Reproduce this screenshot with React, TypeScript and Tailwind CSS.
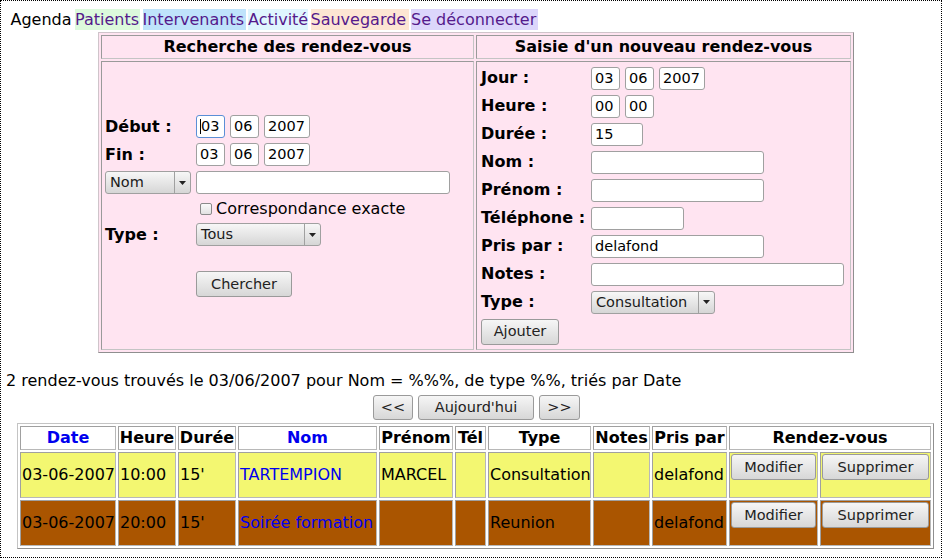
import React from "react";

function Input({ w, value, focused }: { w: string; value?: string; focused?: boolean }) {
  return (
    <div
      className={`${w} h-[23px] shrink-0 rounded-[3px] border ${
        focused ? "border-[#5b8fd6]" : "border-[#a0a0a0]"
      } bg-white flex items-center pl-[3px] text-[14.5px] text-black leading-none`}
    >
      {focused && <span className="w-px h-[15px] bg-black" />}
      {value}
    </div>
  );
}

function Select({ w, text }: { w: string; text: string }) {
  return (
    <div
      className={`${w} h-[23px] shrink-0 flex rounded-[3px] border border-[#a0a0a0] bg-linear-to-b from-[#f7f7f7] to-[#d6d6d6] text-[14.5px] text-[#1a1a1a] leading-none`}
    >
      <span className="flex-1 flex items-center pl-[4px]">{text}</span>
      <span className="w-[16px] border-l border-[#a0a0a0] flex items-center justify-center">
        <svg width="7" height="4" viewBox="0 0 7 4">
          <path d="M0 0h7L3.5 4z" fill="#222" />
        </svg>
      </span>
    </div>
  );
}

function Btn({ cls, children }: { cls: string; children: React.ReactNode }) {
  return (
    <button
      type="button"
      className={`${cls} shrink-0 flex items-center justify-center rounded-[3px] border border-[#9a9a9a] bg-linear-to-b from-[#f6f6f6] to-[#d7d7d7] text-[14.5px] text-[#222] leading-none`}
    >
      {children}
    </button>
  );
}

const pinkCell =
  "bg-[#ffe4f1] border border-t-[#9a9a9a] border-l-[#9a9a9a] border-b-[#c4c4c4] border-r-[#c4c4c4]";
const tCell =
  "border border-t-[#a0a0a0] border-l-[#a0a0a0] border-b-[#b8b8b8] border-r-[#b8b8b8]";

function Label({ children, w }: { children: React.ReactNode; w: string }) {
  return <div className={`${w} shrink-0 font-bold text-[16px] leading-none`}>{children}</div>;
}

function RRow({ label, children }: { label: string; children: React.ReactNode }) {
  return (
    <div className="flex items-center h-[23px]">
      <Label w="w-[110px]">{label}</Label>
      <div className="flex gap-[5px]">{children}</div>
    </div>
  );
}

export default function App() {
  const head = "bg-white flex items-center justify-center font-bold text-[16px] " + tCell;
  const yellow = "bg-[#f3f771] flex items-center pl-[1px] text-[16px] " + tCell;
  const brown = "bg-[#aa5500] flex items-center pl-[1px] text-[16px] " + tCell;
  const yBtn = "bg-[#f3f771] p-[1px] " + tCell;
  const bBtn = "bg-[#aa5500] p-[1px] " + tCell;
  return (
    <div className="w-[942px] h-[558px] overflow-hidden border border-dotted border-black bg-white text-black font-['DejaVu_Sans',sans-serif]">
      {/* nav */}
      <div className="flex gap-[2.5px] pl-[9.5px] mt-[8px] h-[21px] leading-[21px] text-[16px]">
        <span className="w-[62px]">Agenda</span>
        <span className="w-[65px] bg-[#dcfadc] text-[#551a8b]">Patients</span>
        <span className="w-[103px] bg-[#bfe3fb] text-[#551a8b]">Intervenants</span>
        <span className="w-[60px] bg-[#dff6fe] text-[#551a8b]">Activité</span>
        <span className="w-[98px] bg-[#fde6d3] text-[#551a8b]">Sauvegarde</span>
        <span className="w-[127px] bg-[#dcd6fb] text-[#551a8b]">Se déconnecter</span>
      </div>

      {/* top table */}
      <div className="ml-[97px] mt-[2px] w-[756px] p-[2px] bg-[#ffe4f1] border border-t-[#cfc4ca] border-l-[#cfc4ca] border-b-[#8f8f8f] border-r-[#8f8f8f] grid grid-cols-[373px_375px] grid-rows-[24px_289px] gap-[2px]">
        <div className={`${pinkCell} flex items-center justify-center font-bold text-[16px]`}>
          Recherche des rendez-vous
        </div>
        <div className={`${pinkCell} flex items-center justify-center font-bold text-[16px]`}>
          Saisie d'un nouveau rendez-vous
        </div>

        {/* left body */}
        <div className={`${pinkCell} flex flex-col justify-center pl-[3px]`}>
          <div className="flex flex-col mt-[1px]">
            <div className="flex items-center h-[23px]">
              <Label w="w-[91px]">Début :</Label>
              <div className="flex gap-[5px]">
                <Input w="w-[29px]" value="03" focused />
                <Input w="w-[29px]" value="06" />
                <Input w="w-[46px]" value="2007" />
              </div>
            </div>
            <div className="flex items-center h-[23px] mt-[5px]">
              <Label w="w-[91px]">Fin :</Label>
              <div className="flex gap-[5px]">
                <Input w="w-[29px]" value="03" />
                <Input w="w-[29px]" value="06" />
                <Input w="w-[46px]" value="2007" />
              </div>
            </div>
            <div className="flex items-center h-[23px] mt-[5px]">
              <div className="w-[91px] shrink-0">
                <Select w="w-[86px]" text="Nom" />
              </div>
              <Input w="w-[254px]" />
            </div>
            <div className="flex items-center h-[20px] mt-[5px] pl-[95px] text-[16px]">
              <span className="w-[12px] h-[12px] mr-[4px] border border-[#8a8a8a] bg-linear-to-b from-[#fafafa] to-[#e2e2e2] rounded-[2px]" />
              Correspondance exacte
            </div>
            <div className="flex items-center h-[23px] mt-[4px]">
              <Label w="w-[91px]">Type :</Label>
              <Select w="w-[125px]" text="Tous" />
            </div>
            <div className="pl-[91px] mt-[25px]">
              <Btn cls="w-[96px] h-[26px]">Chercher</Btn>
            </div>
          </div>
        </div>

        {/* right body */}
        <div className={`${pinkCell} flex flex-col justify-center pl-[4px]`}>
          <div className="flex flex-col gap-[5px]">
            <RRow label="Jour :">
              <Input w="w-[29px]" value="03" />
              <Input w="w-[29px]" value="06" />
              <Input w="w-[46px]" value="2007" />
            </RRow>
            <RRow label="Heure :">
              <Input w="w-[29px]" value="00" />
              <Input w="w-[29px]" value="00" />
            </RRow>
            <RRow label="Durée :">
              <Input w="w-[52px]" value="15" />
            </RRow>
            <RRow label="Nom :">
              <Input w="w-[173px]" />
            </RRow>
            <RRow label="Prénom :">
              <Input w="w-[173px]" />
            </RRow>
            <RRow label="Téléphone :">
              <Input w="w-[93px]" />
            </RRow>
            <RRow label="Pris par :">
              <Input w="w-[173px]" value="delafond" />
            </RRow>
            <RRow label="Notes :">
              <Input w="w-[253px]" />
            </RRow>
            <RRow label="Type :">
              <Select w="w-[124px]" text="Consultation" />
            </RRow>
            <div>
              <Btn cls="w-[78px] h-[26px]">Ajouter</Btn>
            </div>
          </div>
        </div>
      </div>

      {/* results text */}
      <div className="mt-[18px] pl-[5px] h-[19px] leading-[19px] text-[16px]">
        2 rendez-vous trouvés le 03/06/2007 pour Nom = %%%, de type %%, triés par Date
      </div>

      <div className="flex gap-[5px] ml-[372px] mt-[5px]">
        <Btn cls="w-[40px] h-[25px]">&lt;&lt;</Btn>
        <Btn cls="w-[116px] h-[25px]">Aujourd'hui</Btn>
        <Btn cls="w-[41px] h-[25px]">&gt;&gt;</Btn>
      </div>

      {/* bottom table */}
      <div className="ml-[16px] mt-[3px] w-[917px] p-[2px] bg-white border border-t-[#c4c4c4] border-l-[#c4c4c4] border-b-[#8f8f8f] border-r-[#8f8f8f] grid grid-cols-[96px_58px_58px_139px_74px_31px_103px_57px_75px_89px_111px] grid-rows-[24px_46px_46px] gap-[2px]">
        <div className={`${head} text-[#0000ee]`}>Date</div>
        <div className={head}>Heure</div>
        <div className={head}>Durée</div>
        <div className={`${head} text-[#0000ee]`}>Nom</div>
        <div className={head}>Prénom</div>
        <div className={head}>Tél</div>
        <div className={head}>Type</div>
        <div className={head}>Notes</div>
        <div className={head}>Pris par</div>
        <div className={`${head} col-span-2`}>Rendez-vous</div>

        <div className={yellow}>03-06-2007</div>
        <div className={yellow}>10:00</div>
        <div className={yellow}>15'</div>
        <div className={`${yellow} text-[#0000ee]`}>TARTEMPION</div>
        <div className={yellow}>MARCEL</div>
        <div className={yellow}></div>
        <div className={yellow}>Consultation</div>
        <div className={yellow}></div>
        <div className={yellow}>delafond</div>
        <div className={yBtn}>
          <Btn cls="w-full h-[26px]">Modifier</Btn>
        </div>
        <div className={yBtn}>
          <Btn cls="w-full h-[26px]">Supprimer</Btn>
        </div>

        <div className={brown}>03-06-2007</div>
        <div className={brown}>20:00</div>
        <div className={brown}>15'</div>
        <div className={`${brown} text-[#0000ee]`}>Soirée formation</div>
        <div className={brown}></div>
        <div className={brown}></div>
        <div className={brown}>Reunion</div>
        <div className={brown}></div>
        <div className={brown}>delafond</div>
        <div className={bBtn}>
          <Btn cls="w-full h-[26px]">Modifier</Btn>
        </div>
        <div className={bBtn}>
          <Btn cls="w-full h-[26px]">Supprimer</Btn>
        </div>
      </div>
    </div>
  );
}
